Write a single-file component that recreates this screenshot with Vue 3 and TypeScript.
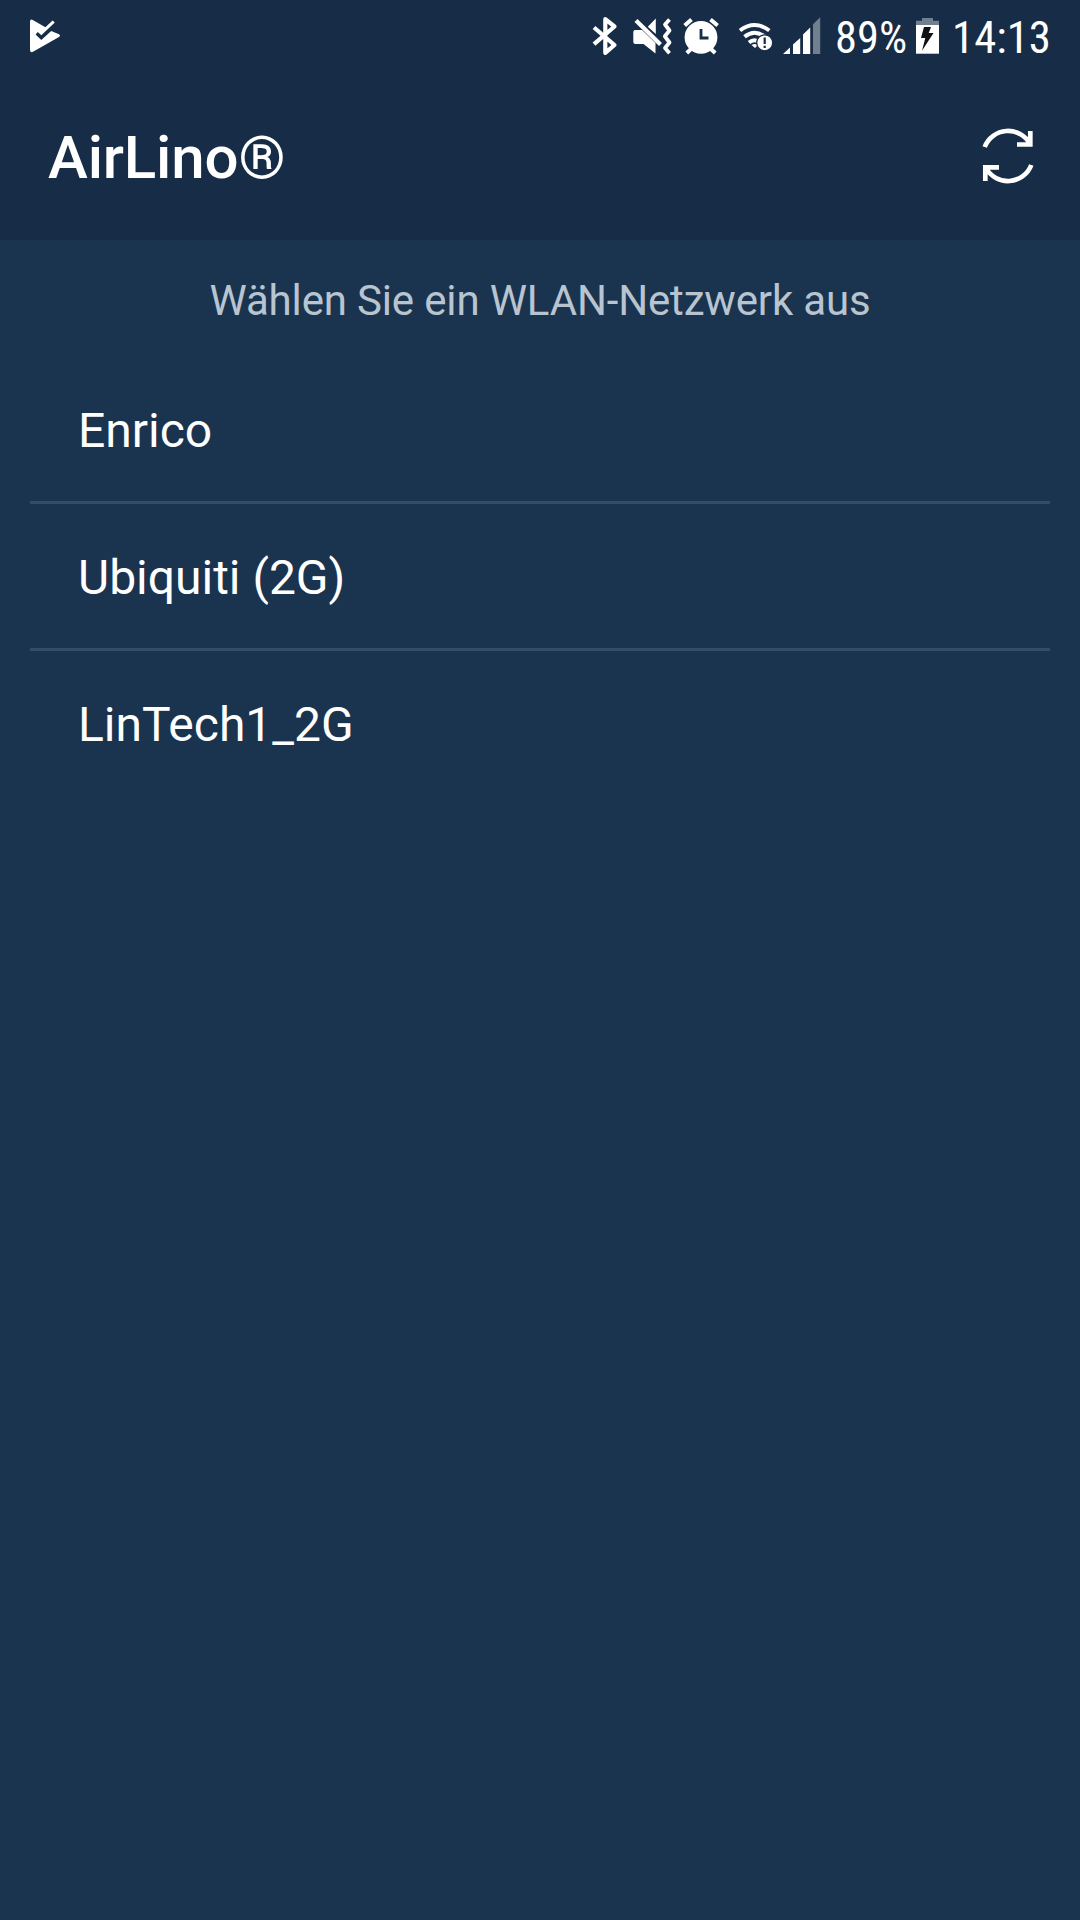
<script setup lang="ts">
interface Network {
  ssid: string
}

const batteryLevel: string = '89%'
const clock: string = '14:13'
const title: string = 'AirLino®'
const hint: string = 'Wählen Sie ein WLAN-Netzwerk aus'
const networks: Network[] = [
  { ssid: 'Enrico' },
  { ssid: 'Ubiquiti (2G)' },
  { ssid: 'LinTech1_2G' },
]
</script>

<template>
  <main class="screen">
    <header class="header">
      <div class="status">
        <svg class="notification" width="40" height="72" viewBox="26 0 40 72">
          <path d="M30 21.8Q30 18.6 32.8 20L45.4 27.2 52.6 20.4 54.8 22.6 41.3 35.3 37.8 32 35.6 34.4 41.3 40 51.2 31 59 34.2Q61 35.6 59 37L33 51.8Q30 53 30 50Z" fill="#fff" />
        </svg>
        <div class="indicators">
          <svg width="40" height="72" viewBox="590 0 40 72">
            <path d="M594 27.5 614.5 45 605.3 52.8V19.2L614.5 26.5 594 44.2" fill="none" stroke="#fff" stroke-width="4.2" stroke-linejoin="round" />
          </svg>
          <svg width="50" height="72" viewBox="630 0 50 72">
            <path d="M633.3 32Q633.3 30 635.3 30H642L655.5 43V53.5L643.5 44H635.3Q633.3 44 633.3 42ZM655.8 18.5V34L647.8 26.8Z" fill="#fff" />
            <path d="M636 20.5 660.5 44.5" stroke="#fff" stroke-width="4.2" />
            <path d="M669.5 19.5 665 24.5 669.5 30.5 664.8 36.3 669.5 42.5 665 48 669.5 53.2" fill="none" stroke="#fff" stroke-width="3.8" stroke-linejoin="round" />
          </svg>
          <svg width="55" height="72" viewBox="680 0 55 72">
            <circle cx="701" cy="37.3" r="16.4" fill="#fff" />
            <path d="M684.7 25.6 691.5 19.5M710.5 19.5 717.6 25.6M686.8 53 691 49M715.2 53 711 49" stroke="#fff" stroke-width="4" />
            <path d="M701 29V38H708.5" fill="none" stroke="#172c46" stroke-width="2.8" />
          </svg>
          <svg width="44" height="72" viewBox="735 0 44 72">
            <path d="M740 30.5Q754.5 19.5 769.3 30.5M744.5 36.8Q754.5 28.6 765 36.8M749 42.5Q754.5 38 760 42.5" fill="none" stroke="#fff" stroke-width="4" />
            <path d="M751.5 45Q754.5 43 758 45L755 48Z" fill="#fff" />
            <circle cx="764.7" cy="42.8" r="8" fill="#fff" stroke="#172c46" stroke-width="1.3" />
            <path d="M764.7 37.5V44M764.7 45.8V48" stroke="#172c46" stroke-width="2.2" />
          </svg>
          <svg width="52" height="72" viewBox="779 0 52 72">
            <path d="M783 54 790 47.5V54ZM793 54V44.5L800.2 38V54ZM803 54V34.5L810.2 27.5V54Z" fill="#fff" />
            <path d="M813 54V24.3L820.2 17.3V54Z" fill="#71808f" />
          </svg>
          <svg width="81" height="72" viewBox="831 0 81 72">
            <text class="condensed" x="835" y="53.2" textLength="72" lengthAdjust="spacingAndGlyphs">{{ batteryLevel }}</text>
          </svg>
          <svg width="36" height="72" viewBox="912 0 36 72">
            <path d="M916 29V20.8H922V18H933V20.8H939V29Z" fill="#71808f" />
            <path d="M916 25H939V53.7H916Z" fill="#fff" />
            <path d="M924 27H931L928.7 33H933.5L922 50.7 925.3 38H921Z" fill="#111" />
          </svg>
          <svg width="132" height="72" viewBox="948 0 132 72">
            <text class="condensed" x="952" y="53.2" textLength="99" lengthAdjust="spacingAndGlyphs">{{ clock }}</text>
          </svg>
        </div>
      </div>
      <div class="toolbar">
        <h1>{{ title }}</h1>
        <button class="refresh" aria-label="Aktualisieren">
          <svg width="56" height="56" viewBox="980 128 56 56" fill="none" stroke="#fff" stroke-width="4.7">
            <path d="M984.7 147A25 25 0 0 1 1030 144M1030.3 131V144.5H1017" />
            <path d="M1031.3 165A25 25 0 0 1 986 168M985.3 181V167.3H999" />
          </svg>
        </button>
      </div>
    </header>
    <p class="hint">{{ hint }}</p>
    <ul class="networks">
      <li v-for="network in networks" :key="network.ssid">{{ network.ssid }}</li>
    </ul>
  </main>
</template>

<style>
body {
  margin: 0;
  background: #1a3450;
}
</style>

<style scoped>
.screen {
  min-height: 1920px;
  background: #1a3450;
  color: #fff;
  font-family: Roboto, "Liberation Sans", sans-serif;
}

.header {
  height: 240px;
  background: #172c46;
}

.status {
  display: flex;
  justify-content: space-between;
  height: 72px;
}

.status svg {
  display: block;
}

.notification {
  margin-left: 26px;
}

.indicators {
  display: flex;
}

.condensed {
  font-family: "Roboto Condensed", Roboto, "Liberation Sans", sans-serif;
  font-size: 45px;
  fill: #fff;
}

.toolbar {
  display: flex;
  align-items: flex-start;
  justify-content: space-between;
  padding: 0 44px 0 48px;
}

h1 {
  margin: 51px 0 0;
  font-size: 60px;
  font-weight: 500;
  line-height: 70px;
  letter-spacing: -0.15px;
}

.refresh {
  margin: 56px 0 0;
  padding: 0;
  border: 0;
  background: none;
}

.refresh svg {
  display: block;
}

.hint {
  height: 117px;
  margin: 0;
  padding-top: 36px;
  box-sizing: border-box;
  color: #b9c4d1;
  font-size: 42px;
  line-height: 50px;
  letter-spacing: -0.16px;
  text-align: center;
}

.networks {
  margin: 0;
  padding: 0 30px;
  list-style: none;
}

.networks li {
  height: 144px;
  padding-left: 48px;
  font-size: 48px;
  line-height: 148px;
}

.networks li + li {
  border-top: 3px solid #334d68;
}
</style>
